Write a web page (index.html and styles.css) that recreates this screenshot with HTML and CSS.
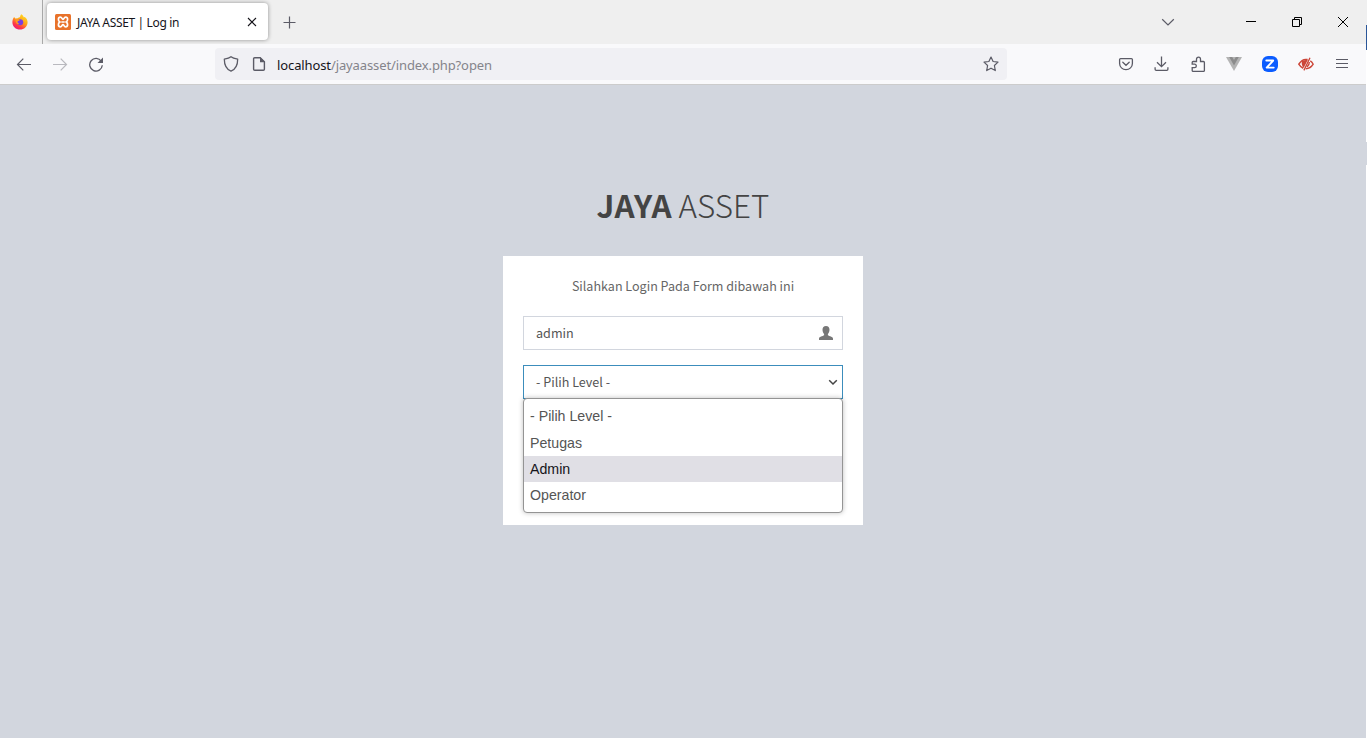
FILE: index.html
```html
<!DOCTYPE html>
<html lang="id">
<head>
<meta charset="utf-8">
<title>JAYA ASSET | Log in</title>
<link rel="stylesheet" href="styles.css">
</head>
<body>
<div class="desktop">
<div class="window">
  <header class="tabbar">
    <div class="pinned">
      <svg width="16" height="16" viewBox="0 0 16 16"><defs><linearGradient id="ff" x1="0.8" y1="0" x2="0.2" y2="1"><stop offset="0" stop-color="#ffe226"/><stop offset=".45" stop-color="#ffa016"/><stop offset=".75" stop-color="#ff3647"/><stop offset="1" stop-color="#e31587"/></linearGradient></defs><path d="M9.200 0.200C10.500.9 11.300 2 11.700 3.200L12.700 3C14.500 4.200 15.700 6.300 15.600 8.500 15.400 12.500 12.200 15.600 8 15.600S.4 12.400.4 8.200C.4 6.100 1.100 4.200 2.200 2.900L3.200 4.400 5.700 4.300C6.700 3.700 7.200 3.400 8 3.300 8 2.200 8.400 1.100 9.200.2Z" fill="url(#ff)"/><circle cx="8.200" cy="8.300" r="3" fill="#7a3fe0"/><path d="M3.300 5.200C5 4.600 6.700 5 7.700 6.400L5.600 7.300C5.200 8.400 5.900 9.500 7.300 9.700 5.600 11 3.700 9.500 3.300 5.200Z" fill="#ff9a1f"/></svg>
    </div>
    <div class="tab">
      <svg width="16" height="16" viewBox="0 0 16 16"><rect width="16" height="16" rx="1.500" fill="#e8722a"/><path d="M5.300 3.200C3 3.200 2.700 6.600 4.800 8 2.700 9.400 3 12.800 5.300 12.800 7.200 12.800 6.800 10.600 8 10.600S8.800 12.800 10.700 12.800C13 12.800 13.300 9.400 11.200 8 13.300 6.600 13 3.200 10.700 3.200 8.800 3.200 9.200 5.400 8 5.400S7.200 3.200 5.300 3.200Z" fill="none" stroke="#fff" stroke-width="1.700"/><path d="M6.300 8H9.700" stroke="#fff" stroke-width="1.500"/></svg>
      <span class="tab-title">JAYA ASSET | Log in</span>
      <svg class="tab-close" width="10" height="10" viewBox="0 0 10 10"><path d="M1 1 9 9M9 1 1 9" stroke="#15141a" stroke-width="1.100"/></svg>
    </div>
    <svg class="new-tab" width="13" height="13" viewBox="0 0 13 13"><path d="M6.500 .5V12.500M.5 6.500H12.500" stroke="#5b5b66" stroke-width="1.200"/></svg>
    <div class="window-controls">
      <svg width="14" height="14" viewBox="0 0 14 14"><path d="M1.200 4.200 7 9.900 12.800 4.200" fill="none" stroke="#5b5b66" stroke-width="1.200"/></svg>
      <svg width="10" height="10" viewBox="0 0 10 10"><path d="M0 4.500H10" stroke="#000"/></svg>
      <svg width="10" height="10" viewBox="0 0 10 10"><path d="M.5 2.500H7.500V9.500H.5ZM2.500 2.500V.5H9.500V7.500H7.500" fill="none" stroke="#000"/></svg>
      <svg width="10" height="10" viewBox="0 0 10 10"><path d="M0 0 10 10M10 0 0 10" stroke="#000"/></svg>
    </div>
  </header>
  <nav class="toolbar">
    <svg width="16" height="16" viewBox="0 0 16 16"><path d="M15 8.500H1.500M7.300 2.700 1.500 8.500 7.300 14.300" fill="none" stroke="#5b5b66" stroke-width="1.200"/></svg>
    <svg class="disabled" width="16" height="16" viewBox="0 0 16 16"><path d="M1 8.500H14.500M8.700 2.700 14.500 8.500 8.700 14.300" fill="none" stroke="#5b5b66" stroke-width="1.200"/></svg>
    <svg width="16" height="16" viewBox="0 0 16 16"><path d="M13.300 5.300A6.300 6.300 0 1 0 14.300 9.300" fill="none" stroke="#5b5b66" stroke-width="1.300"/><path d="M15 1.500V7H9.500Z" fill="#5b5b66"/></svg>
    <div class="urlbar">
      <svg width="16" height="16" viewBox="0 0 16 16"><path d="M8 .8C6.500 2.100 4.200 2.700 1.300 3.100 1.300 9 3.500 13.500 8 15.200 12.500 13.500 14.700 9 14.700 3.100 11.800 2.700 9.500 2.100 8 .8Z" fill="none" stroke="#5b5b66" stroke-width="1.300" stroke-linejoin="round"/></svg>
      <svg class="page-icon" width="14" height="16" viewBox="0 0 14 16"><path d="M8.200 1.700H2.700Q1.600 1.700 1.600 2.800V13.200Q1.600 14.300 2.700 14.300H11.300Q12.400 14.300 12.400 13.200V5.800Z" fill="none" stroke="#5b5b66" stroke-width="1.400"/><path d="M8 1.300V6.300H13Z" fill="#5b5b66"/></svg>
      <span class="url"><b>localhost</b>/jayaasset/index.php?open</span>
      <svg class="star" width="16" height="16" viewBox="0 0 16 16"><path d="M8 1 10.100 5.500 15 6.100 11.400 9.500 12.300 14.600 8 12.200 3.700 14.600 4.600 9.500 1 6.100 5.900 5.500Z" fill="none" stroke="#5b5b66" stroke-width="1.200" stroke-linejoin="round"/></svg>
    </div>
    <div class="actions">
      <svg width="16" height="16" viewBox="0 0 16 16"><path d="M2.600 2.600H13.400Q14.400 2.600 14.400 3.600V7.500A6.400 6.200 0 0 1 1.600 7.500V3.600Q1.600 2.600 2.600 2.600ZM4.800 6.300 8 9.300 11.200 6.300" fill="none" stroke="#5b5b66" stroke-width="1.300" stroke-linecap="round"/></svg>
      <svg width="16" height="16" viewBox="0 0 16 16"><path d="M7.500 .5V10.500M3 6.200 7.500 10.700 12 6.200M1.100 11.300V13.300Q1.100 14.300 2.200 14.300H12.800Q13.900 14.300 13.900 13.300V11.300" fill="none" stroke="#5b5b66" stroke-width="1.300"/></svg>
      <svg width="16" height="16" viewBox="0 0 16 16"><path d="M3.200 15.400Q2.200 15.400 2.200 14.400V11.600H4.600A1.700 1.700 0 0 0 4.600 8.200H2.200V6.500Q2.200 5.500 3.200 5.500H6.500V3.200A2 2 0 0 1 10.500 3.200V5.500H13.400Q14.400 5.500 14.400 6.500V14.400Q14.400 15.400 13.400 15.400Z" fill="none" stroke="#5b5b66" stroke-width="1.300"/></svg>
      <svg width="16" height="16" viewBox="0 0 16 16"><path d="M0 1H16L8 15Z" fill="#b4b4b4"/><path d="M3.200 1H6.200L8 4 9.800 1H12.800L8 9.400Z" fill="#8c8c8c"/></svg>
      <svg width="16" height="16" viewBox="0 0 16 16"><rect width="16" height="16" rx="6" fill="#0b5cff"/><path d="M4.300 4.500H11.200L4.700 11.600H11.700" fill="none" stroke="#fff" stroke-width="1.900" stroke-linejoin="round" stroke-linecap="round"/></svg>
      <svg width="16" height="16" viewBox="0 0 16 16"><path d="M9.500 3.600C7 3 3.200 4.300.8 8.200 2 10.200 3.500 11.600 5.200 12.300" fill="none" stroke="#cc4638" stroke-width="1.500"/><path d="M4.200 4.800 10 3.500 5.600 12Q2.800 8.500 4.200 4.800Z" fill="#cc4638"/><path d="M12.300 4.800C13.500 5.600 14.500 6.800 15.200 8.200 13.500 11 11 12.700 7.800 12.700M11.300 6Q11.500 8.800 9 11" fill="none" stroke="#cc4638" stroke-width="1.400"/><path d="M12 1.800 5.900 14.400" stroke="#cc4638" stroke-width="1.300"/></svg>
      <svg width="16" height="16" viewBox="0 0 16 16"><path d="M2 3.500H14M2 7.500H14M2 11.500H14" stroke="#5b5b66" stroke-width="1.200"/></svg>
    </div>
  </nav>
  <main class="page">
    <h1 class="logo"><b>JAYA</b> ASSET</h1>
    <section class="login-box">
      <p class="message">Silahkan Login Pada Form dibawah ini</p>
      <div class="field">
        <span class="value">admin</span>
        <svg width="14" height="14" viewBox="0 0 14 14"><path d="M7 0C9.300 0 10.500 1.400 10.500 3.700 10.500 5.700 9.700 7 8.900 7.900V9.200C10.300 10.200 14 10.500 14 12.600V14H0V12.600C0 10.500 3.700 10.200 5.100 9.200V7.900C4.300 7 3.500 5.700 3.500 3.700 3.500 1.400 4.700 0 7 0Z" fill="#777"/></svg>
      </div>
      <div class="field select">
        <span class="value">- Pilih Level -</span>
        <svg width="10" height="8" viewBox="0 0 10 8"><path d="M1.200 2.200 5 6 8.800 2.200" fill="none" stroke="#444" stroke-width="1.500"/></svg>
        <ul class="options">
          <li>- Pilih Level -</li>
          <li>Petugas</li>
          <li class="active">Admin</li>
          <li>Operator</li>
        </ul>
      </div>
    </section>
  </main>
</div>
<div class="edge"></div>
</div>
</body>
</html>
```
FILE: styles.css
```css
* { box-sizing: border-box; }
body { margin: 0; overflow: hidden; }
svg { display: block; flex: none; }
.desktop { display: flex; width: 1367px; height: 738px; }
.window { width: 1366px; display: flex; flex-direction: column; font-family: "Noto Sans", sans-serif; }
.edge { width: 1px; background: linear-gradient(#efefef 25px, #2a5699 25px 50px, #fff 50px 142px, #d2d6de 142px 165px, #fff 165px); }
.tabbar { height: 44px; background: #efefef; display: flex; align-items: center; }
.pinned { width: 43px; height: 44px; padding: 14px 0 0 12px; border-right: 1px solid #a9a9a9; }
.tab { width: 221px; height: 37px; margin: 0 0 1px 4px; padding: 0 11px 0 8px; background: #fff; border-radius: 4px; box-shadow: 0 0 4px rgba(0,0,0,.4); display: flex; align-items: center; }
.tab-title { margin-left: 6px; padding-top: 2px; font-size: 12px; letter-spacing: -.35px; color: #15141a; white-space: nowrap; }
.tab-close { margin-left: auto; }
.new-tab { margin: 1px 0 0 15px; }
.window-controls { margin-left: auto; margin-right: 18px; display: flex; align-items: center; }
.window-controls svg:nth-child(2) { margin-left: 71px; }
.window-controls svg:nth-child(n+3) { margin-left: 36px; }
.toolbar { height: 41px; padding: 0 16px; background: #f9f9fb; border-bottom: 1px solid #ccc; display: flex; align-items: center; gap: 20px; }
.disabled { opacity: .4; }
.urlbar { width: 792px; height: 32px; margin-left: 91px; padding: 0 8px; background: #f0f0f4; border-radius: 4px; display: flex; align-items: center; }
.page-icon { margin-left: 13px; }
.url { margin-left: 11px; padding-top: 2px; font-size: 13px; letter-spacing: -.11px; color: #84848b; white-space: nowrap; }
.url b { font-weight: 400; color: #15141a; }
.star { margin-left: auto; }
.actions { margin-left: auto; display: flex; gap: 20px; }
.page { flex: 1; background: #d2d6de; display: flex; flex-direction: column; align-items: center; font-family: "Noto Sans CJK JP", sans-serif; }
.logo { margin: 95px 0 26px; height: 50px; line-height: 50px; font-size: 31.400px; font-weight: 300; color: #444; white-space: nowrap; }
.logo b { font-weight: 700; }
.login-box { width: 360px; height: 269px; padding: 20px; background: #fff; }
.message { margin: 0 0 20px; height: 20px; line-height: 20px; font-size: 12.550px; text-align: center; color: #666; }
.field { width: 320px; height: 34px; margin-bottom: 15px; padding: 0 9px 0 12px; border: 1px solid #d2d6de; display: flex; align-items: center; justify-content: space-between; font-size: 12.600px; color: #555; }
.value { line-height: 32px; }
.select { position: relative; border-color: #3c8dbc; padding-right: 4px; }
.options { position: absolute; z-index: 1; left: -1px; top: 32px; width: 320px; height: 115px; margin: 0; padding: 4px 0; list-style: none; background: #fff; border: 1px solid #949494; border-radius: 4px; box-shadow: 0 0 5px rgba(0,0,0,.25); font: 14.200px/26px "Liberation Sans", sans-serif; }
.options li { height: 26px; padding-left: 6px; }
.options li:first-child { height: 27px; }
.options .active { background: #e0dfe5; color: #15141a; }
```
